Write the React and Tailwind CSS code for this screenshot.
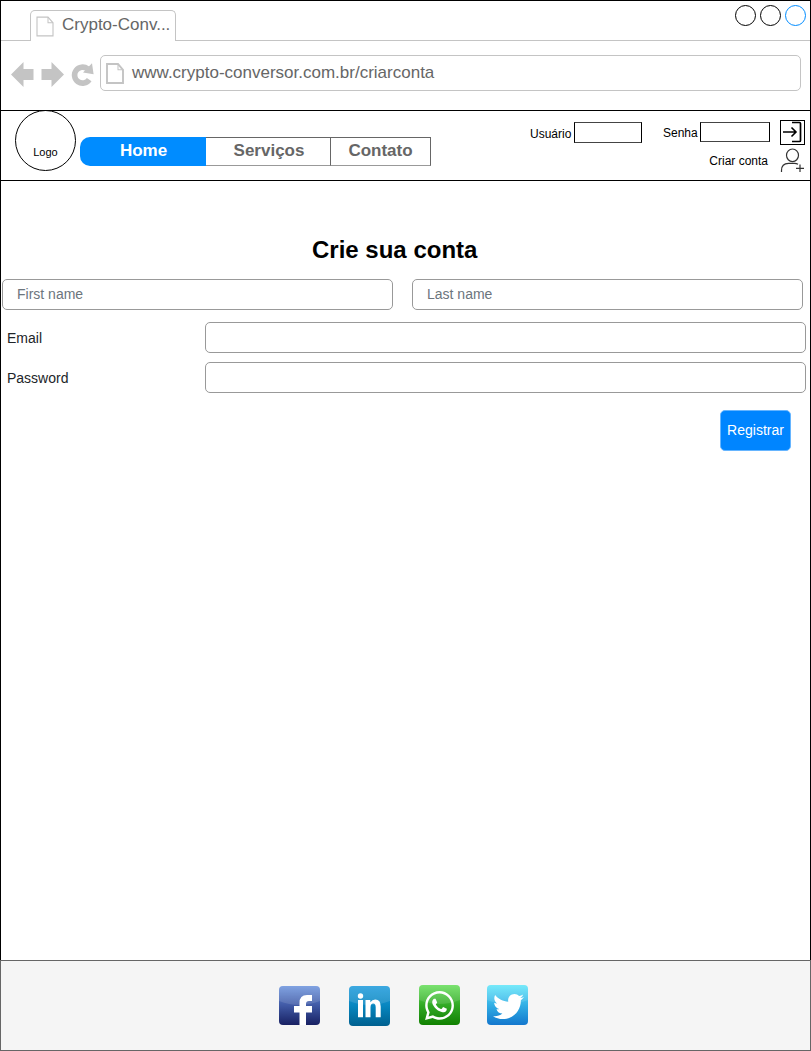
import React from 'react';
import { FaTwitter, FaWhatsapp } from 'react-icons/fa';

function PageIcon({ className, strokeWidth }) {
  return (
    <svg className={className} viewBox="0 0 18 20" preserveAspectRatio="none" fill="none" stroke="#c4c4c4" strokeWidth={strokeWidth}>
      <path d="M1 1H12L17 6.5V19H1Z" />
      <path d="M12 1V6.5H17" strokeWidth="1" />
    </svg>
  );
}

function TabStrip() {
  return (
    <div className="flex h-10 items-end">
      <div className="h-10 w-[29px] border-b border-[#c4c4c4]" />
      <div className="flex h-[31px] w-[146px] rounded-t-[5px] border border-b-0 border-[#c4c4c4] pl-[5px]">
        <PageIcon className="mt-[5px] h-[21px] w-[18px]" strokeWidth="1.1" />
        <span className="ml-[8px] mt-[4px] text-[17px] leading-5 text-[#666]">Crypto-Conv...</span>
      </div>
      <div className="flex h-10 flex-1 justify-end gap-[4px] border-b border-[#c4c4c4] pr-[4px] pt-[4px]">
        <div className="size-[21px] rounded-full border border-black" />
        <div className="size-[21px] rounded-full border border-black" />
        <div className="size-[21px] rounded-full border border-[#008cff]" />
      </div>
    </div>
  );
}

function AddressBar() {
  return (
    <div className="flex h-[69px] pl-[10px] pt-[14px]">
      <svg className="h-[36px] w-[89px]" viewBox="11 55 89 36" fill="#c4c4c4">
        <path d="M11 74.5 23.5 62V69H33.5V80H23.5V87Z" />
        <path d="M64 74.5 51.5 62V69H41.5V80H51.5V87Z" />
        <path d="M89.2 79.6A8 8 0 1 1 87.5 68.8" fill="none" stroke="#c4c4c4" strokeWidth="5.6" />
        <path d="M92 63.2 93.6 74.2 83 72.6Z" />
      </svg>
      <div className="flex h-9 w-[701px] rounded-[5px] border border-[#c4c4c4] pl-[5px]">
        <PageIcon className="mt-[7px] h-[21px] w-[18px]" strokeWidth="1.9" />
        <span className="ml-[8px] mt-[7px] text-[17px] leading-5 text-[#666]">www.crypto-conversor.com.br/criarconta</span>
      </div>
    </div>
  );
}

function SiteHeader() {
  return (
    <header className="flex h-[71px] justify-between border-y border-black">
      <div className="flex">
        <div className="-mt-px ml-[14px] flex size-[61px] justify-center rounded-full border border-black pt-[34px] text-[11px] leading-[14px]">
          Logo
        </div>
        <nav className="ml-[4px] mt-[26px] flex h-[29px] text-[17px] font-bold leading-7 text-[#666]">
          <div className="w-[126px] rounded-l-[10px] bg-[#008cff] pl-px text-center text-white">Home</div>
          <div className="w-[125px] border-y border-r border-[#666] border-b-[#999] pl-[2px] text-center leading-[26px]">Serviços</div>
          <div className="w-[100px] border-y border-r border-[#666] border-b-[#999] text-center leading-[26px]">Contato</div>
        </nav>
      </div>
      <div className="flex pr-[4px] text-[12px] leading-[14px]">
        <div className="flex w-[241px] flex-col">
          <div className="flex pt-[11px]">
            <span className="w-[44px] pt-[5px]">Usuário</span>
            <div className="h-[21px] w-[68px] border border-black border-y-[#444]" />
            <span className="ml-[21px] w-[37px] pt-[4px]">Senha</span>
            <div className="h-[20px] w-[70px] border border-black border-y-[#444]" />
          </div>
          <span className="mt-[11px] pr-[3px] text-right">Criar conta</span>
        </div>
        <svg className="ml-[9px] mt-[9px] h-[54px] w-[26px]" viewBox="780 120 26 54" fill="none" stroke="#000">
          <rect x="780.5" y="120.5" width="24" height="24" />
          <path d="M792 122.5H799.5Q800.5 122.5 800.5 123.5V140.5Q800.5 141.5 799.5 141.5H792" strokeWidth="1.7" />
          <path d="M783 132H796M791.5 127.5 796 132 791.5 136.5" strokeWidth="1.6" />
          <g stroke="#333" strokeWidth="1.2">
            <ellipse cx="792.5" cy="155.3" rx="6" ry="6.3" />
            <path d="M781.5 172V170.5Q781.5 163.4 788.5 163.4H794.5Q796.5 163.4 798 164.3" />
            <path d="M800 164.5V172M796 168.3H804" />
          </g>
        </svg>
      </div>
    </header>
  );
}

function SignupForm() {
  return (
    <main className="h-[779px] pl-px text-[14px] leading-4 text-[#212529]">
      <h1 className="ml-[310px] pt-[55px] text-[24px] font-bold leading-7 text-black">Crie sua conta</h1>
      <div className="mt-[15px] flex gap-[19px] text-[#6c757d]">
        <div className="h-[31px] w-[391px] rounded-[5px] border border-[#999] pl-[14px] pt-[6px]">First name</div>
        <div className="h-[31px] w-[391px] rounded-[5px] border border-[#999] pl-[14px] pt-[6px]">Last name</div>
      </div>
      <div className="mt-3 flex items-center">
        <span className="w-[203px] pl-[5px]">Email</span>
        <div className="h-[31px] w-[601px] rounded-[5px] border border-[#999]" />
      </div>
      <div className="mt-[9px] flex items-center">
        <span className="w-[203px] pl-[5px]">Password</span>
        <div className="h-[31px] w-[601px] rounded-[5px] border border-[#999]" />
      </div>
      <button className="ml-[718px] mt-[17px] flex h-[41px] w-[71px] items-center justify-center rounded-[5px] border border-[#66b5ff] bg-[#0085ff] pb-[2px] text-white">
        Registrar
      </button>
    </main>
  );
}

function Gloss() {
  return <path d="M0 3Q0 0 3 0H38Q41 0 41 3V15Q20 23 0 15Z" fill="#fff" fillOpacity=".12" />;
}

function SocialFooter() {
  return (
    <footer className="flex h-[91px] border-y border-[#666] bg-[#f5f5f5] pl-[278px]">
      <svg className="mt-[25px] h-[39px] w-[41px] rounded-[4px] bg-linear-to-b from-[#6f96de] via-[#4059a5] to-[#192163]" viewBox="0 0 41 39">
        <Gloss />
        <path d="M20.5 39V26.5H15V20H20.5V17Q20.5 9 28 9H33V15H30Q27 15 27 18V20H33V26.5H27V39Z" fill="#fff" />
      </svg>
      <svg className="ml-[29px] mt-[25px] h-[40px] w-[41px] rounded-[4px] bg-linear-to-b from-[#219ddd] via-[#0786bf] to-[#00608f]" viewBox="0 0 41 40">
        <Gloss />
        <g fill="#fff">
          <circle cx="11.5" cy="10" r="2.7" />
          <path d="M9 14H14V31.2H9ZM16.5 14H21.3V16.3Q23 13.4 26.3 13.4 31.7 13.4 31.7 20.5V31.2H26.7V21.5Q26.7 17.6 24.2 17.6 21.5 17.6 21.5 21.5V31.2H16.5Z" />
        </g>
      </svg>
      <div className="ml-[29px] mt-[24px] grid h-[40px] w-[41px] place-items-center overflow-hidden rounded-[4px] bg-linear-to-b from-[#68df5c] via-[#32aa25] to-[#108100] text-white">
        <svg className="col-start-1 row-start-1 h-[40px] w-[41px]" viewBox="0 0 41 40"><Gloss /></svg>
        <FaWhatsapp className="col-start-1 row-start-1 size-[33px]" />
      </div>
      <div className="ml-[27px] mt-[24px] grid h-[40px] w-[41px] place-items-center overflow-hidden rounded-[4px] bg-linear-to-b from-[#63e7fa] via-[#32afe5] to-[#1477cd] text-white">
        <svg className="col-start-1 row-start-1 h-[40px] w-[41px]" viewBox="0 0 41 40"><Gloss /></svg>
        <FaTwitter className="col-start-1 row-start-1 ml-[2px] mt-[2px] size-[31px]" />
      </div>
    </footer>
  );
}

export default function App() {
  return (
    <div className="flex h-[1051px] w-[811px] flex-col bg-white font-['Liberation_Sans',Arial,sans-serif] text-black">
      <div className="h-[960px] border-x border-t border-black">
        <TabStrip />
        <AddressBar />
        <SiteHeader />
        <SignupForm />
      </div>
      <div className="border-x border-[#666]">
        <SocialFooter />
      </div>
    </div>
  );
}
